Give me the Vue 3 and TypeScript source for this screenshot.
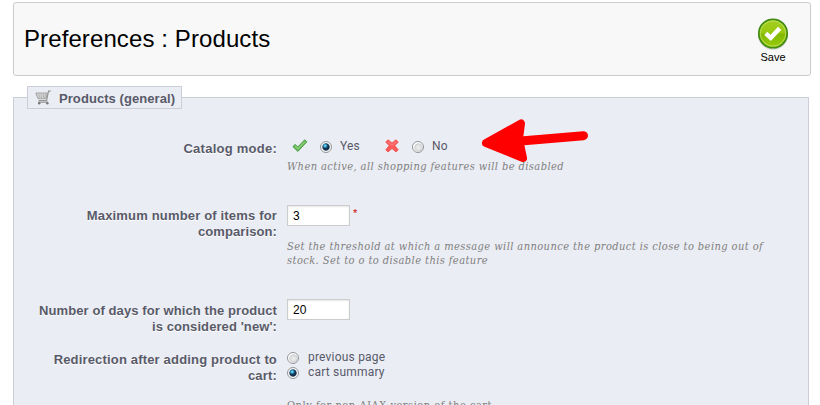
<script setup lang="ts">
import { ref } from 'vue'

const catalogMode = ref<'yes' | 'no'>('yes')
const redirection = ref<'previous' | 'cart'>('cart')
const maxItems = ref('3')
const newDays = ref('20')
</script>

<template>
  <div class="page">
    <header class="toolbar">
      <h1>Preferences : Products</h1>
      <button class="save" type="button">
        <svg width="32" height="32" viewBox="0 0 32 32">
          <defs>
            <linearGradient id="saveFill" x1="0" y1="0" x2="0" y2="1">
              <stop offset="0" stop-color="#a5d024" />
              <stop offset="0.48" stop-color="#98c80e" />
              <stop offset="0.52" stop-color="#80b900" />
              <stop offset="1" stop-color="#9ccc0c" />
            </linearGradient>
          </defs>
          <ellipse cx="16" cy="17.2" rx="15" ry="14.5" fill="#bbb" opacity=".65" />
          <circle cx="16" cy="15.5" r="14.2" fill="url(#saveFill)" stroke="#438c12" stroke-width="1.7" />
          <circle cx="16" cy="15.5" r="12.7" fill="none" stroke="#c5e36b" stroke-width=".8" />
          <path d="M8.8 15.3 13.7 19.8 22.7 10.4" fill="none" stroke="#fff" stroke-width="4.5" />
        </svg>
        <span>Save</span>
      </button>
    </header>

    <section class="panel">
      <div class="legend">
        <svg width="16" height="16" viewBox="0 0 16 16">
          <path d="M.8 3H12.2L11 8.7H3Z" fill="#e2e2e2" stroke="#a0a0a0" />
          <path d="M3.5 3 5 9M6 3 6.7 9M8.5 3V9M10.6 3 9.5 9M1.7 5H12M2.3 7H11.5" fill="none" stroke="#b0b0b0" stroke-width=".7" />
          <path d="M15.7 1.2H13.5L11.6 10.5H3.7M3 12.2H13" fill="none" stroke="#939393" stroke-width="1.2" />
          <circle cx="4.2" cy="13.3" r="1.2" fill="#777" />
          <circle cx="12.4" cy="13.3" r="1.2" fill="#777" />
        </svg>
        <span>Products (general)</span>
      </div>

      <div class="row catalog">
        <div class="label">Catalog mode:</div>
        <div class="field">
          <div class="choices">
            <svg class="mark" width="16" height="16" viewBox="0 0 16 16">
              <path d="M.9 8.6 3.2 6.5 5.8 9 12.7 1.8 14.8 3.8 5.9 13.4Z" fill="#6cbd5b" stroke="#469a43" stroke-linejoin="round" />
              <path d="M3.1 8 6 10.7 12.8 3.6" fill="none" stroke="#8fce7b" stroke-width="1.2" />
            </svg>
            <label class="option yes"><input v-model="catalogMode" type="radio" value="yes" /><span>Yes</span></label>
            <svg class="mark cross" width="16" height="16" viewBox="0 0 16 16">
              <path d="M1.8 4 4 1.8 8 5.2 12 1.8 14.2 4 10.7 7.8 14.2 11.7 12 13.9 8 10.4 4 13.9 1.8 11.7 5.3 7.8Z" fill="#ff5b59" stroke="#ef5052" stroke-linejoin="round" />
              <path d="M3.8 3.5 8 7.3 12.2 3.5" fill="none" stroke="#ff8a86" />
            </svg>
            <label class="option"><input v-model="catalogMode" type="radio" value="no" /><span>No</span></label>
          </div>
          <p class="help first">When active, all shopping features will be disabled</p>
        </div>
      </div>

      <div class="row maximum">
        <div class="label">Maximum number of items for<br /><span class="snug">comparison:</span></div>
        <div class="field">
          <div class="entry"><input v-model="maxItems" class="text" type="text" /><sup>*</sup></div>
          <p class="help threshold">Set the threshold at which a message will announce the product is close to being out of<br />stock. Set to o to disable this feature</p>
        </div>
      </div>

      <div class="row days">
        <div class="label"><span class="snug">Number of days for which the product</span><br /><span class="snug">is considered 'new':</span></div>
        <div class="field">
          <div class="entry"><input v-model="newDays" class="text" type="text" /></div>
        </div>
      </div>

      <div class="row redirect">
        <div class="label">Redirection after adding product to<br />cart:</div>
        <div class="field">
          <label class="stacked"><input v-model="redirection" type="radio" value="previous" /><span>previous page</span></label>
          <label class="stacked"><input v-model="redirection" type="radio" value="cart" /><span>cart summary</span></label>
          <p class="help ajax">Only for non-AJAX version of the cart</p>
        </div>
      </div>

      <svg class="pointer" width="110" height="46" viewBox="0 0 110 46">
        <path d="M5 26 40 6.5 38 22 42 41Z" class="head" />
        <path d="M34 24.5 102.5 18.7" class="shaft" />
      </svg>
    </section>
  </div>
</template>

<style>
body {
  overflow: hidden;
  background: #fff;
}
</style>

<style scoped>
.page {
  width: 820px;
  height: 405px;
  overflow: hidden;
  padding: 2px 10px 0 13px;
  box-sizing: border-box;
  font-family: "Liberation Sans", Arial, sans-serif;
  color: #585a69;
}
.toolbar {
  display: flex;
  justify-content: space-between;
  box-sizing: border-box;
  width: 798px;
  height: 74px;
  border: 1px solid #ccc;
  border-radius: 3px;
  background: #f8f8f8;
}
h1 {
  margin: 21px 0 0 10px;
  color: #000;
  font-size: 24px;
  font-weight: 400;
  line-height: 30px;
  letter-spacing: 0.1px;
}
.save {
  display: flex;
  flex-direction: column;
  align-items: center;
  width: 44px;
  margin: 15px 15px 0 0;
  padding: 0;
  border: 0;
  background: none;
  color: #000;
  font: 11px/14px "Liberation Sans", Arial, sans-serif;
}
.panel {
  position: relative;
  box-sizing: border-box;
  width: 796px;
  height: 340px;
  margin-top: 21px;
  border: 1px solid #ccced7;
  background: #ebedf4;
}
.legend {
  display: flex;
  align-items: center;
  gap: 8px;
  box-sizing: border-box;
  width: 155px;
  height: 23px;
  margin: -12px 0 0 13px;
  padding-left: 7px;
  border: 1px solid #ccced7;
  background: #ebedf4;
  font-size: 13px;
  font-weight: 700;
  letter-spacing: 0.07px;
  white-space: nowrap;
}
.legend span {
  padding-top: 2px;
}
.row {
  display: flex;
  align-items: flex-start;
}
.label {
  width: 263px;
  margin-right: 10px;
  padding-top: 6px;
  text-align: right;
  font-size: 13px;
  font-weight: 700;
  line-height: 16px;
  letter-spacing: 0.17px;
  text-shadow: 0 1px 0 #fff;
  white-space: nowrap;
}
.snug {
  letter-spacing: 0.09px;
}
.catalog {
  height: 70px;
  margin-top: 26px;
}
.catalog .label {
  letter-spacing: 0.25px;
}
.maximum {
  height: 94px;
}
.maximum .label {
  padding-top: 3px;
}
.days {
  height: 50px;
}
.days .label {
  padding-top: 4px;
}
.redirect .label {
  padding-top: 3px;
}
.choices {
  display: flex;
  align-items: center;
  height: 22px;
}
.mark {
  margin-left: 5px;
}
.cross {
  margin-left: 4px;
}
.option {
  display: flex;
  align-items: center;
}
.option span,
.stacked span {
  font-family: Roboto, sans-serif;
  font-size: 12px;
  letter-spacing: 0.2px;
}
.option input {
  margin-left: 12px;
  margin-top: 2px;
}
.option span {
  margin-left: 8px;
}
.yes {
  width: 72px;
}
input[type="radio"] {
  appearance: none;
  flex: none;
  box-sizing: border-box;
  width: 12px;
  height: 12px;
  margin-right: 0;
  margin-bottom: 0;
  border: 1px solid #939597;
  border-radius: 50%;
  background: radial-gradient(circle at 55% 55%, #eee 0, #ddd 3px, #c7c9cb 3.8px, #fff 4.5px);
}
input[type="radio"]:checked {
  background:
    radial-gradient(circle at 42% 38%, #9be5ff 0, #2997c6 1.5px, transparent 2.7px),
    radial-gradient(circle at 50% 50%, #14324e 0 3.2px, #f8f8f8 4.1px);
}
.text {
  box-sizing: border-box;
  width: 63px;
  height: 21px;
  padding: 0 5px;
  border: 1px solid #ccc;
  background: #fff;
  box-shadow: inset 0 1px 2px #e6e6e6;
  color: #000;
  font: 12px/19px "Liberation Sans", Arial, sans-serif;
}
.entry {
  display: flex;
  height: 21px;
}
sup {
  margin-left: 3px;
  color: #c00;
  font-size: 11px;
  line-height: 17px;
}
.help {
  margin: 0;
  color: #7f7f7f;
  font: italic 11px/14px "DejaVu Serif Condensed", "DejaVu Serif", Georgia, serif;
  letter-spacing: 0.415px;
  white-space: nowrap;
}
.first {
  margin-top: 3px;
}
.threshold {
  margin-top: 14px;
}
.stacked {
  display: flex;
  align-items: center;
  height: 15px;
}
.stacked input {
  margin: 3px 0 0;
}
.stacked span {
  margin-left: 9px;
}
.ajax {
  margin-top: 20px;
  font-style: normal;
  letter-spacing: 0.5px;
}
.pointer {
  position: absolute;
  top: 19px;
  left: 467px;
}
.head {
  fill: #f00;
  stroke: #f00;
  stroke-width: 8px;
  stroke-linejoin: round;
}
.shaft {
  fill: none;
  stroke: #f00;
  stroke-width: 9px;
  stroke-linecap: round;
}
</style>
